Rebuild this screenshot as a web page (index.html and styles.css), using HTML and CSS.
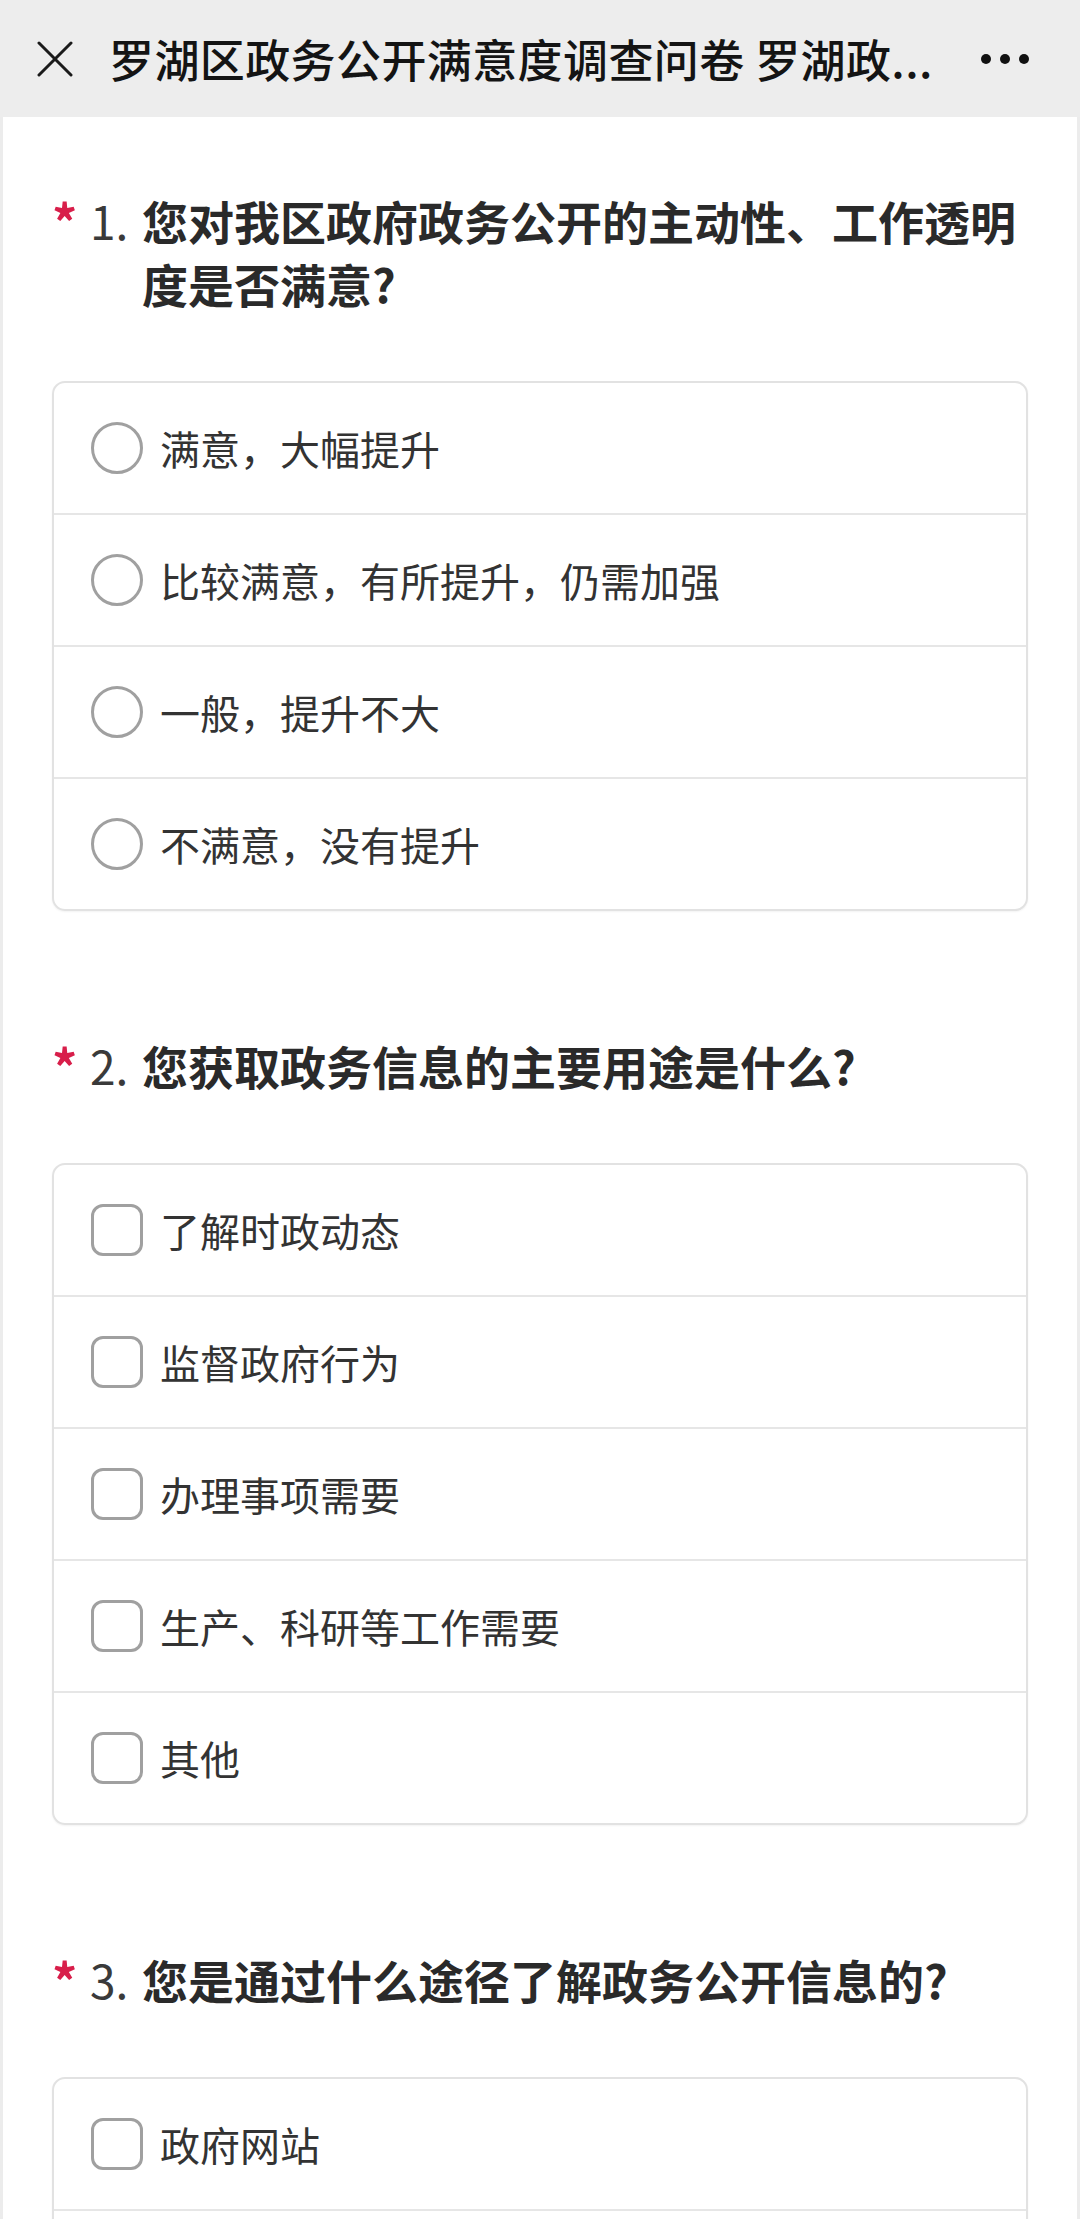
FILE: index.html
```html
<!DOCTYPE html>
<html lang="zh-CN">
<head>
<meta charset="utf-8">
<title>罗湖区政务公开满意度调查问卷</title>
<link rel="stylesheet" href="styles.css">
</head>
<body>
<header class="topbar">
  <svg class="close" viewBox="0 0 36 36" aria-hidden="true"><path d="M2 2 L34 34 M34 2 L2 34" stroke="#1a1a1a" stroke-width="3" fill="none" stroke-linecap="round"/></svg>
  <div class="title">罗湖区政务公开满意度调查问卷 罗湖政...</div>
  <div class="more"><i></i><i></i><i></i></div>
</header>
<main class="content">
  <section class="qblock">
    <h2 class="question"><span class="star">*</span><span class="num">1.</span><span class="qtext">您对我区政府政务公开的主动性、工作透明度是否满意?</span></h2>
    <div class="options">
      <div class="option"><span class="mark radio"></span><span>满意，大幅提升</span></div>
      <div class="option"><span class="mark radio"></span><span>比较满意，有所提升，仍需加强</span></div>
      <div class="option"><span class="mark radio"></span><span>一般，提升不大</span></div>
      <div class="option"><span class="mark radio"></span><span>不满意，没有提升</span></div>
    </div>
  </section>
  <section class="qblock">
    <h2 class="question"><span class="star">*</span><span class="num">2.</span><span class="qtext">您获取政务信息的主要用途是什么?</span></h2>
    <div class="options">
      <div class="option"><span class="mark checkbox"></span><span>了解时政动态</span></div>
      <div class="option"><span class="mark checkbox"></span><span>监督政府行为</span></div>
      <div class="option"><span class="mark checkbox"></span><span>办理事项需要</span></div>
      <div class="option"><span class="mark checkbox"></span><span>生产、科研等工作需要</span></div>
      <div class="option"><span class="mark checkbox"></span><span>其他</span></div>
    </div>
  </section>
  <section class="qblock">
    <h2 class="question"><span class="star">*</span><span class="num">3.</span><span class="qtext">您是通过什么途径了解政务公开信息的?</span></h2>
    <div class="options">
      <div class="option"><span class="mark checkbox"></span><span>政府网站</span></div>
      <div class="option empty"></div>
    </div>
  </section>
</main>
</body>
</html>
```

FILE: styles.css
```css
html, body {
  margin: 0;
  padding: 0;
}
body {
  background: #ffffff;
  font-family: "Noto Sans CJK SC", "Noto Sans", sans-serif;
  height: 2219px;
  overflow: hidden;
}
.topbar {
  height: 117px;
  background: #ededed;
  display: flex;
  align-items: center;
  padding: 0 51px 0 37px;
  box-sizing: border-box;
}
.close {
  width: 36px;
  height: 36px;
  flex: none;
}
.title {
  margin-left: 36px;
  font-size: 45px;
  line-height: 1.2;
  color: #141414;
  font-weight: 500;
  white-space: nowrap;
  flex: none;
  letter-spacing: 0.4px;
}
.more {
  display: flex;
  gap: 9px;
  flex: none;
  margin-left: auto;
}
.more i {
  display: block;
  width: 10px;
  height: 10px;
  border-radius: 50%;
  background: #111;
}
.content {
  display: flow-root;
  border-left: 3px solid #ececec;
  border-right: 3px solid #ececec;
  padding: 0 49px;
  min-height: 2102px;
}
.question {
  display: flex;
  margin: 123px 0 66px;
  font-size: 46px;
  line-height: 63px;
  font-weight: 700;
  color: #2a2a2a;
}
.qblock:first-child .question {
  margin-top: 72px;
}
.star {
  flex: none;
  width: 38px;
  color: #d81e4a;
  font-weight: 700;
  font-size: 50px;
  line-height: 63px;
}
.num {
  flex: none;
  width: 52px;
  font-weight: 400;
  color: #3a3a3a;
}
.qtext {
  flex: 1;
}
.options {
  border: 2px solid #e2e2e2;
  border-radius: 13px;
  box-shadow: 0 1px 2px rgba(0, 0, 0, 0.05);
}
.option {
  height: 130px;
  display: flex;
  align-items: center;
  padding-left: 37px;
  font-size: 40px;
  color: #333;
}
.option + .option {
  border-top: 2px solid #e6e6e6;
}
.mark {
  flex: none;
  width: 52px;
  height: 52px;
  box-sizing: border-box;
  border: 3px solid #a0a0a0;
  margin-right: 17px;
}
.radio {
  border-radius: 50%;
}
.checkbox {
  border-radius: 12px;
}
```
